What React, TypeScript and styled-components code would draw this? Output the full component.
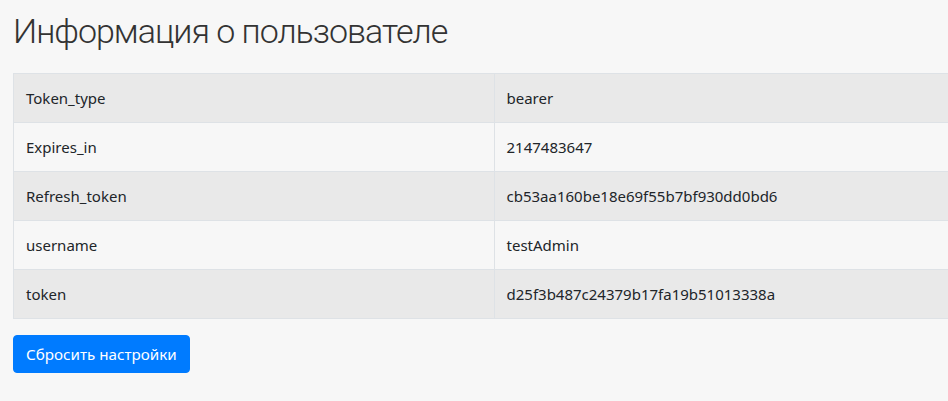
import React from "react";
import styled, { createGlobalStyle } from "styled-components";

const GlobalStyle = createGlobalStyle`
  html, body {
    margin: 0;
    padding: 0;
    background: #f7f7f7;
    overflow: hidden;
  }
  body {
    font-family: "Noto Sans", "Open Sans", Arial, sans-serif;
    color: #212529;
  }
`;

const Page = styled.div`
  padding: 0 0 0 13px;
  width: 962px;
`;

const Title = styled.h1`
  margin: 0;
  padding-top: 9px;
  height: 73px;
  box-sizing: border-box;
  font-family: Roboto, sans-serif;
  font-weight: 300;
  font-size: 34px;
  letter-spacing: -1px;
  line-height: 44px;
  color: #333;
`;

const Table = styled.table`
  width: 962px;
  border-collapse: collapse;
  table-layout: fixed;
  margin-bottom: 16px;
`;

const Row = styled.tr<{ $striped: boolean }>`
  background: ${(p) => (p.$striped ? "#e9e9e9" : "#f7f7f7")};
`;

const Cell = styled.td`
  border: 1px solid #dee2e6;
  padding: 0 12px;
  height: 48px;
  font-size: 15px;
  line-height: 24px;
  vertical-align: middle;
`;

const Button = styled.button`
  display: inline-block;
  height: 38px;
  padding: 0 12px;
  border: 1px solid #007bff;
  border-radius: 4px;
  background: #007bff;
  color: #fff;
  font-family: "Noto Sans", "Open Sans", sans-serif;
  font-size: 15.2px;
  line-height: 24px;
  cursor: pointer;
`;

const rows: [string, string][] = [
  ["Token_type", "bearer"],
  ["Expires_in", "2147483647"],
  ["Refresh_token", "cb53aa160be18e69f55b7bf930dd0bd6"],
  ["username", "testAdmin"],
  ["token", "d25f3b487c24379b17fa19b51013338a"],
];

export default function App() {
  return (
    <>
      <GlobalStyle />
      <Page>
        <Title>Информация о пользователе</Title>
        <Table>
          <tbody>
            {rows.map(([k, v], i) => (
              <Row key={k} $striped={i % 2 === 0}>
                <Cell>{k}</Cell>
                <Cell>{v}</Cell>
              </Row>
            ))}
          </tbody>
        </Table>
        <Button>Сбросить настройки</Button>
      </Page>
    </>
  );
}
